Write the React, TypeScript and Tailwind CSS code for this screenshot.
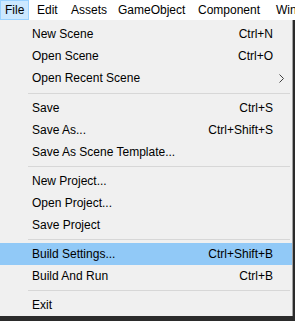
import React from "react";

type Entry =
  | { kind: "item"; label: string; shortcut?: string; submenu?: boolean; active?: boolean }
  | { kind: "sep"; tall?: boolean };

const menuBar = [
  { label: "File", width: "w-[29px]", pad: "pl-[4px]", active: true },
  { label: "Edit", width: "w-[34px]", pad: "pl-[7px]" },
  { label: "Assets", width: "w-[47px]", pad: "pl-[7px]" },
  { label: "GameObject", width: "w-[80px]", pad: "pl-[7px]" },
  { label: "Component", width: "w-[78px]", pad: "pl-[7px]" },
  { label: "Window", width: "w-[70px]", pad: "pl-[7px]" },
];

const entries: Entry[] = [
  { kind: "item", label: "New Scene", shortcut: "Ctrl+N" },
  { kind: "item", label: "Open Scene", shortcut: "Ctrl+O" },
  { kind: "item", label: "Open Recent Scene", submenu: true },
  { kind: "sep", tall: true },
  { kind: "item", label: "Save", shortcut: "Ctrl+S" },
  { kind: "item", label: "Save As...", shortcut: "Ctrl+Shift+S" },
  { kind: "item", label: "Save As Scene Template..." },
  { kind: "sep" },
  { kind: "item", label: "New Project..." },
  { kind: "item", label: "Open Project..." },
  { kind: "item", label: "Save Project" },
  { kind: "sep" },
  { kind: "item", label: "Build Settings...", shortcut: "Ctrl+Shift+B", active: true },
  { kind: "item", label: "Build And Run", shortcut: "Ctrl+B" },
  { kind: "sep" },
  { kind: "item", label: "Exit" },
];

const Chevron = () => (
  <svg width="5" height="9" viewBox="0 0 5 9" className="block">
    <polyline points="0.5,0.5 4.5,4.5 0.5,8.5" fill="none" stroke="#404040" strokeWidth="1" />
  </svg>
);

export default function App() {
  return (
    <div
      className="w-[295px] h-[321px] overflow-hidden bg-[#2b2b2b] text-[12px] text-black"
      style={{ fontFamily: '"Liberation Sans", Arial, sans-serif' }}
    >
      {/* Menu bar */}
      <div className="flex h-[20px] bg-white whitespace-nowrap">
        {menuBar.map((m) => (
          <div
            key={m.label}
            className={`flex items-center shrink-0 h-[20px] border ${m.width} ${m.pad} ${
              m.active ? "bg-[#cce8ff] border-[#99d1ff]" : "border-transparent"
            }`}
          >
            {m.label}
          </div>
        ))}
      </div>

      {/* File dropdown */}
      <div className="w-[293px] h-[296px] bg-[#f0f0f0] border-r border-[#a0a0a0] pt-[3px]">
        {entries.map((e, i) =>
          e.kind === "sep" ? (
            <div key={i} className={`flex items-center ${e.tall ? "h-[8px]" : "h-[7px]"}`}>
              <div className="ml-[28px] w-[262px] h-px bg-[#d7d7d7]" />
            </div>
          ) : (
            <div
              key={i}
              className={`flex items-center justify-between h-[22px] pl-[32px] pr-[19px] whitespace-nowrap ${
                e.active ? "bg-[#91c9f7]" : ""
              }`}
            >
              <span>{e.label}</span>
              {e.shortcut && <span>{e.shortcut}</span>}
              {e.submenu && (
                <span className="-mr-[11px]">
                  <Chevron />
                </span>
              )}
            </div>
          )
        )}
      </div>
    </div>
  );
}
